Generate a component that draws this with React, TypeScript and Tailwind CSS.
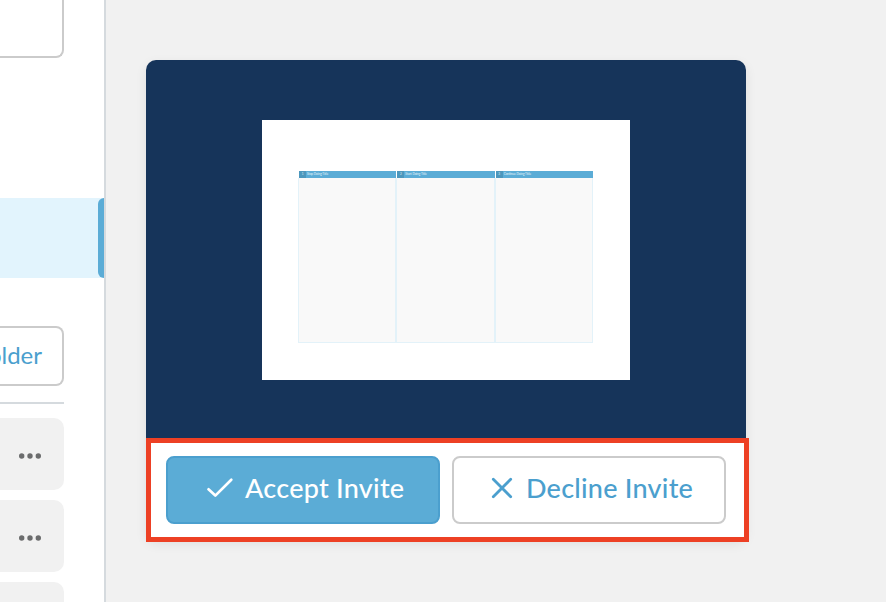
const columns = ['Stop Doing Title', 'Start Doing Title', 'Continue Doing Title'];

function Dots() {
  return (
    <svg width="24" height="6" viewBox="0 0 24 6" fill="#6b6c6d">
      <circle cx="3.7" cy="3" r="2.7" />
      <circle cx="12" cy="3" r="2.7" />
      <circle cx="20.3" cy="3" r="2.7" />
    </svg>
  );
}

function Row() {
  return (
    <div className="flex h-[72px] w-16 shrink-0 items-center justify-end rounded-r-[10px] bg-[#f1f1f1] pt-1 pr-[22px]">
      <Dots />
    </div>
  );
}

function Sidebar() {
  return (
    <aside className="flex h-full w-[106px] shrink-0 flex-col overflow-hidden border-r-2 border-[#d5dade] bg-white">
      <div className="h-[58px] w-16 shrink-0 rounded-br-lg border-r-2 border-b-2 border-[#cbcbcb]" />
      <div className="mt-[140px] flex h-20 shrink-0 justify-end bg-[#e2f4fd]">
        <div className="w-1.5 rounded-l-md bg-[#5bacd6]" />
      </div>
      <div className="mt-12 flex h-[60px] w-16 shrink-0 items-center justify-end overflow-hidden rounded-r-lg border-y-2 border-r-2 border-[#cbcbcb] pr-5 pb-0.5">
        <span className="text-[24px] leading-none whitespace-nowrap text-[#4b9fce]">older</span>
      </div>
      <div className="mt-4 h-0.5 w-16 shrink-0 bg-[#d5dade]" />
      <div className="mt-3.5 flex flex-col gap-2.5">
        <Row />
        <Row />
        <Row />
      </div>
    </aside>
  );
}

function Thumbnail() {
  return (
    <div className="h-[260px] w-[368px] bg-white pt-[51px] pl-9">
      <div className="flex h-[172px] w-[295px] bg-white">
        {columns.map((title, i) => (
          <div key={title} className="flex flex-1 flex-col">
            <div className="ml-px flex h-[7px] items-center bg-[#5bacd6] text-[3px] leading-none whitespace-nowrap text-white">
              <span className="flex h-full w-[7px] items-center justify-center bg-[#4c97bd] text-white/80">{i + 1}</span>
              <span className="pl-px text-white/85">{title}</span>
            </div>
            <div className="flex-1 border-x border-b border-[#e3f2f9] bg-[#f9f9f9]" />
          </div>
        ))}
      </div>
    </div>
  );
}

export default function App() {
  return (
    <div className="flex h-[602px] w-[886px] overflow-hidden bg-[#f1f1f1] font-[Lato,sans-serif]">
      <Sidebar />
      <main className="pt-[60px] pl-10">
        <div className="h-[480px] w-[600px] rounded-[10px] shadow-[0_4px_12px_rgba(0,0,0,0.08)]">
          <div className="flex h-[378px] justify-center rounded-t-[10px] bg-[#16345a] pt-[60px]">
            <Thumbnail />
          </div>
          <div className="flex h-[104px] w-[603px] gap-3 border-5 border-[#ed4024] bg-white pt-[13px] pl-[15px]">
            <button className="flex h-[68px] w-[274px] items-center rounded-lg border-2 border-[#4b9fce] bg-[#5bacd6] pb-1 pl-[38px] text-white">
              <svg width="28" height="22" viewBox="0 0 28 22" fill="none" stroke="currentColor" strokeWidth="2.7" strokeLinecap="round" strokeLinejoin="round">
                <path d="M2.5 12.3 9.3 18.6 25.3 2.8" />
              </svg>
              <span className="ml-[11px] pb-px text-[27px] leading-none font-medium tracking-[0.25px] whitespace-nowrap">Accept Invite</span>
            </button>
            <button className="flex h-[68px] w-[274px] items-center rounded-lg border-2 border-[#cbcbcb] bg-white pb-1 pl-[37px] text-[#4b9fce]">
              <svg width="22" height="22" viewBox="0 0 22 22" fill="none" stroke="currentColor" strokeWidth="2.8" strokeLinecap="round">
                <path d="M2.3 2.3 19.7 19.7M19.7 2.3 2.3 19.7" />
              </svg>
              <span className="ml-[13px] pb-px text-[27px] leading-none font-medium tracking-[0.25px] whitespace-nowrap">Decline Invite</span>
            </button>
          </div>
        </div>
      </main>
    </div>
  );
}
